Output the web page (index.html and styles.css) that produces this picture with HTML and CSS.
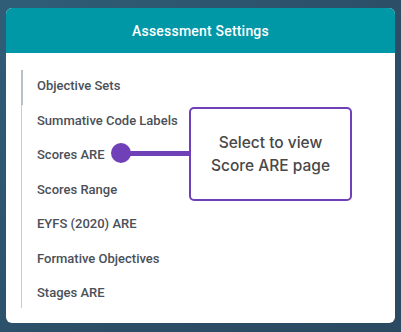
FILE: index.html
```html
<!DOCTYPE html>
<html lang="en">
<head>
  <meta charset="UTF-8" />
  <title>Assessment Settings</title>
  <link rel="stylesheet" href="styles.css">
</head>
<body>

<div class="settings-card">
  <div class="card-header">Assessment Settings</div>
  <div class="card-body">
    <ul class="settings-nav">
      <li class="active">Objective Sets</li>
      <li>Summative Code Labels</li>
      <li class="has-callout">Scores ARE
        <div class="callout">
          <span class="callout-dot"></span>
          <span class="callout-line"></span>
          <div class="callout-box">Select to view<br>Score ARE page</div>
        </div>
      </li>
      <li>Scores Range</li>
      <li>EYFS (2020) ARE</li>
      <li>Formative Objectives</li>
      <li>Stages ARE</li>
    </ul>
  </div>
</div>

</body>
</html>
```

FILE: styles.css
```css
body {
  margin: 0;
  width: 401px;
  height: 332px;
  background: linear-gradient(135deg, #2f5d78 0%, #2c4d66 60%, #2b4a62 100%);
  font-family: Roboto, 'Noto Sans', sans-serif;
  padding: 8px 6px 0;
  box-sizing: border-box;
  overflow: hidden;
}
.settings-card {
  width: 389px;
  height: 315px;
  background: #ffffff;
  border-radius: 6px;
  overflow: hidden;
}
.card-header {
  background-color: #0097a7;
  color: #ffffff;
  height: 45px;
  line-height: 47px;
  text-align: center;
  font-size: 14px;
  font-weight: 500;
  letter-spacing: 0.2px;
}
.card-body {
  padding: 17px 0 0 15px;
}
.settings-nav {
  list-style: none;
  margin: 0;
  padding: 0;
  border-left: 1px solid #c8ccd0;
  width: 300px;
  height: 238px;
}
.settings-nav li {
  position: relative;
  height: 34.5px;
  line-height: 32px;
  padding-left: 14px;
  font-size: 13px;
  font-weight: 500;
  color: #4b5058;
  margin-left: -1px;
  border-left: 2px solid transparent;
}
.settings-nav li.active {
  border-left-color: #b3c2ca;
}
.callout {
  position: absolute;
  left: 88px;
  top: 0;
}
.callout-dot {
  position: absolute;
  left: 0;
  top: 4px;
  width: 20px;
  height: 20px;
  border-radius: 50%;
  background: #7040b8;
}
.callout-line {
  position: absolute;
  left: 10px;
  top: 12px;
  width: 70px;
  height: 5px;
  background: #7040b8;
}
.callout-box {
  position: absolute;
  left: 78px;
  top: -32px;
  width: 159px;
  height: 90px;
  border: 2px solid #7040b8;
  border-radius: 5px;
  background: #ffffff;
  display: flex;
  align-items: center;
  justify-content: center;
  text-align: center;
  font-family: Inter, 'Noto Sans', sans-serif;
  font-size: 15.5px;
  font-weight: 500;
  line-height: 23px;
  color: #484848;
}
```
